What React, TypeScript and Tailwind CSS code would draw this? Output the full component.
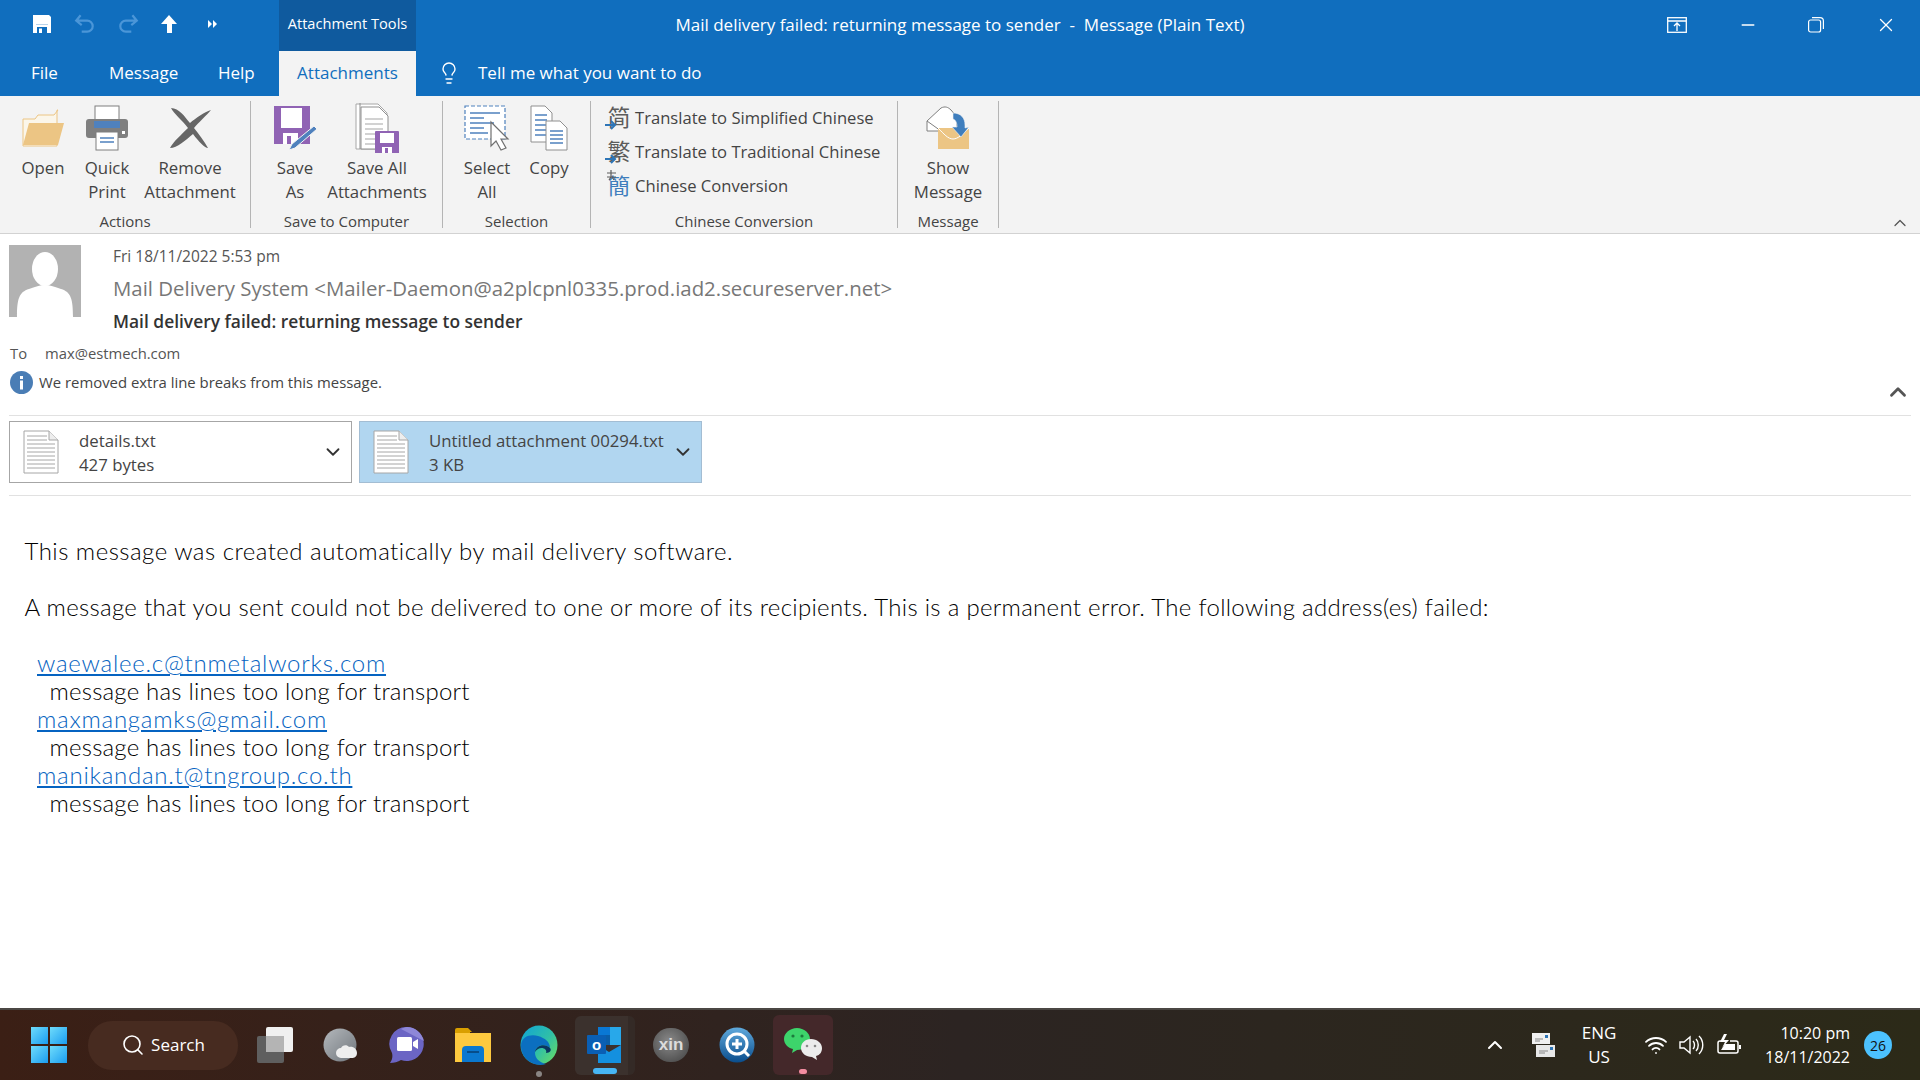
import React from 'react';
import { ChevronDown, ChevronUp, Lightbulb, Search, Wifi, X, Minus } from 'lucide-react';

// Ribbon icons
const FloppySmall = () => (
  <svg width="20" height="20" viewBox="0 0 20 20">
    <path d="M1 1h16l2 2v16H1z" fill="#fff" />
    <path d="M4 10.5h12" stroke="#b9d3ea" strokeWidth="1" />
    <rect x="5" y="13" width="10" height="6" fill="#106ebe" />
    <rect x="7" y="14.5" width="3" height="4.5" fill="#fff" />
  </svg>
);

const FolderIcon = () => (
  <svg width="44" height="40" viewBox="0 0 44 40">
    <path d="M2 11h12l3-4h16l4-5h-1v36H2z" fill="#fbf6ea" stroke="#ecc584" strokeWidth="1" />
    <path d="M8 15h35l-6 22H2z" fill="#ecc584" />
  </svg>
);

const PrinterIcon = () => (
  <svg width="44" height="46" viewBox="0 0 44 46">
    <rect x="10" y="1" width="24" height="16" fill="#fff" stroke="#7f7f7f" />
    <path d="M4 14h36a3 3 0 0 1 3 3v13a3 3 0 0 1-3 3H4a3 3 0 0 1-3-3V17a3 3 0 0 1 3-3z" fill="#7f7f7f" />
    <rect x="9" y="16" width="26" height="7" fill="#4f81bd" />
    <rect x="11" y="27" width="22" height="18" fill="#fff" stroke="#7f7f7f" />
    <path d="M15 33h14M15 37h14" stroke="#4f81bd" strokeWidth="1.5" />
    <rect x="37" y="26" width="3" height="3" fill="#fff" />
  </svg>
);

const RemoveIcon = () => (
  <svg width="44" height="42" viewBox="0 0 44 42">
    <path d="M3 1c8 0 14 9 19 15C28 11 36 5 43 3c-4 5-13 13-17 18 5 6 10 13 14 20-3 0-9-6-15-14C18 33 9 41 2 41c3-6 12-14 18-20C14 13 6 7 3 1z" fill="#666" />
  </svg>
);

const SaveAsIcon = () => (
  <svg width="44" height="46" viewBox="0 0 44 46">
    <path d="M1 1h36v38H1z" fill="#9063b4" />
    <rect x="8" y="3" width="21" height="20" fill="#fff" />
    <rect x="10" y="28" width="15" height="11" fill="#fff" />
    <rect x="14" y="31" width="4" height="8" fill="#9063b4" />
    <path d="M41 21l3 3-22 19-6 2 3-6z" fill="#4f81bd" stroke="#f3f3f3" strokeWidth="1" />
  </svg>
);

const SaveAllIcon = () => (
  <svg width="44" height="50" viewBox="0 0 44 50">
    <path d="M1 1h22l9 9v36H1z" fill="#fff" stroke="#a6a6a6" />
    <path d="M5 0v46M6 4h18l9 9v33H6z" fill="#fff" stroke="#8f8f8f" />
    <path d="M10 16h18M10 21h18M10 26h18M10 31h12M10 36h12M10 41h12" stroke="#a6a6a6" strokeWidth="1.2" />
    <rect x="20" y="28" width="24" height="23" rx="1" fill="#9063b4" />
    <rect x="25" y="30" width="14" height="10" fill="#fff" />
    <rect x="27" y="44" width="10" height="7" fill="#fff" />
    <rect x="30" y="45" width="3" height="6" fill="#9063b4" />
  </svg>
);

const SelectAllIcon = () => (
  <svg width="46" height="46" viewBox="0 0 46 46">
    <rect x="1" y="1" width="40" height="33" fill="#fff" stroke="#4f81bd" strokeWidth="1.2" strokeDasharray="4 2" />
    <path d="M6 8h30M6 13h14M6 18h24M6 23h14M6 28h18" stroke="#4f81bd" strokeWidth="1.4" />
    <path d="M27 17v24l5-5 5 9 5-2-5-9h7z" fill="#fff" stroke="#707070" strokeWidth="1.2" />
  </svg>
);

const CopyIcon = () => (
  <svg width="38" height="46" viewBox="0 0 38 46">
    <path d="M1 1h14l7 7v29H1z" fill="#fff" stroke="#8f8f8f" />
    <path d="M5 10h12M5 15h12M5 20h12M5 25h12M5 30h12" stroke="#4f81bd" strokeWidth="1.3" />
    <path d="M16 16h14l7 7v22H16z" fill="#fff" stroke="#8f8f8f" />
    <path d="M20 26h13M20 30h13M20 34h13M20 38h13" stroke="#4f81bd" strokeWidth="1.3" />
  </svg>
);

const ShowMessageIcon = () => (
  <svg width="44" height="44" viewBox="0 0 44 44">
    <path d="M1 15L15 2c4-2 7-1 10 2l6 7v14H1z" fill="#fff" stroke="#7f7f7f" />
    <path d="M1 15l14 10" stroke="#7f7f7f" />
    <path d="M12 22h31v21H12z" fill="#ecc584" />
    <path d="M12 22c6 6 10 11 15 11s10-5 16-11" fill="none" stroke="#fff" strokeWidth="1" />
    <path d="M27 7c8 0 12 5 12 12v3l4-1-8 10-9-10h5c0-4-1-7-4-8z" fill="#3f7ebd" stroke="#f3f3f3" strokeWidth="0.6" />
  </svg>
);

const ChineseIcon = ({ ch }: { ch: string }) => (
  <span className="relative flex h-[24px] w-[22px] -translate-y-[2px] items-center justify-center text-[23px] leading-none text-[#5c5c5c] [font-family:'Noto_Sans_CJK_SC',sans-serif]">
    {ch}
    <svg className="absolute left-[-3px] bottom-[-2px]" width="13" height="10" viewBox="0 0 13 10">
      <path d="M0 5h9M6 1l4 4-4 4" fill="none" stroke="#2e75b6" strokeWidth="2" />
    </svg>
  </span>
);

const ConversionIcon = () => (
  <span className="relative flex h-[24px] w-[22px] -translate-y-[2px] items-center justify-center text-[22px] leading-none text-[#3f7ebd] [font-family:'Noto_Sans_CJK_TC',sans-serif]">
    簡
    <svg className="absolute left-[-2px] top-[-2px]" width="12" height="12" viewBox="0 0 12 12" fill="none" stroke="#5c5c5c" strokeWidth="1.2">
      <path d="M1 3h9M5 0v7M1 7h9M3 10l2-3M8 10L6 7" />
    </svg>
  </span>
);

const TxtIcon = () => (
  <svg width="36" height="44" viewBox="0 0 36 44">
    <path d="M1 1h25l9 9v33H1z" fill="#fff" stroke="#a6a6a6" />
    <path d="M26 1v9h9" fill="#eee" stroke="#a6a6a6" />
    <path d="M4 6h20M4 10h20M4 14h28M4 18h28M4 22h28M4 26h28M4 30h28M4 34h28M4 38h28" stroke="#a6a6a6" strokeWidth="1" />
  </svg>
);

// Taskbar icons
const WinLogo = () => (
  <svg width="36" height="36" viewBox="0 0 36 36">
    <defs>
      <linearGradient id="wl" x1="0" y1="0" x2="1" y2="1">
        <stop offset="0" stopColor="#6fdcfb" />
        <stop offset="1" stopColor="#1a9cf0" />
      </linearGradient>
    </defs>
    <rect x="0" y="0" width="17" height="17" fill="url(#wl)" />
    <rect x="19" y="0" width="17" height="17" fill="url(#wl)" />
    <rect x="0" y="19" width="17" height="17" fill="url(#wl)" />
    <rect x="19" y="19" width="17" height="17" fill="url(#wl)" />
  </svg>
);

const TaskView = () => (
  <svg width="36" height="36" viewBox="0 0 36 36">
    <rect x="0" y="9" width="27" height="27" rx="2" fill="#5f5f5f" />
    <rect x="9" y="0" width="27" height="25" rx="2" fill="#f0f0f0" />
    <rect x="9" y="9" width="18" height="16" fill="#b4b4b4" />
  </svg>
);

const CloudBall = () => (
  <svg width="36" height="36" viewBox="0 0 36 36">
    <defs>
      <linearGradient id="cb" x1="0" y1="0" x2="1" y2="1">
        <stop offset="0" stopColor="#b4b8bc" />
        <stop offset="1" stopColor="#70767c" />
      </linearGradient>
    </defs>
    <circle cx="17" cy="18" r="16.5" fill="url(#cb)" />
    <path d="M18 31a5 5 0 0 1 0-10c1-3 6-4 8-1 4-1 8 2 8 6s-3 5-5 5z" fill="#eee" />
  </svg>
);

const TeamsIcon = () => (
  <svg width="36" height="38" viewBox="0 0 36 38">
    <path d="M18 1a17 17 0 1 1-6 33c-3 2-7 3-11 3 2-3 3-6 2-10A17 17 0 0 1 18 1z" fill="#6b65c4" />
    <path d="M18 1c8 0 15 6 17 14L12 3c2-1 4-2 6-2z" fill="#8e87d8" />
    <rect x="8" y="11" width="15" height="14" rx="1.5" fill="#fff" />
    <path d="M24 16l5-3v10l-5-3z" fill="#fff" />
  </svg>
);

const ExplorerIcon = () => (
  <svg width="36" height="34" viewBox="0 0 36 34">
    <path d="M0 2a2 2 0 0 1 2-2h11l4 4h-2v2H0z" fill="#d99f00" />
    <path d="M0 5h36v29H0z" fill="#fdc93f" />
    <path d="M7 22a4 4 0 0 1 4-4h14a4 4 0 0 1 4 4v12H7z" fill="#0b78cf" />
    <rect x="12" y="23" width="12" height="2" fill="#074d8a" />
  </svg>
);

const EdgeIcon = () => (
  <svg width="38" height="40" viewBox="0 0 38 40">
    <defs>
      <linearGradient id="eg1" x1="0" y1="0" x2="1" y2="0.8">
        <stop offset="0" stopColor="#0fa3d6" />
        <stop offset="0.6" stopColor="#2fbfa8" />
        <stop offset="1" stopColor="#62d96b" />
      </linearGradient>
    </defs>
    <ellipse cx="19" cy="20" rx="18.5" ry="19.5" fill="url(#eg1)" />
    <path d="M1 21C1 11 11 9 18 11c7 2 12 6 12 12-5-5-15-3-15 5 0 5 4 9 11 11C13 43 1 33 1 21z" fill="#0b6fc0" />
    <path d="M15 27c1-7 10-9 15-4 2 2 0 5-4 5 2-5-7-8-11-1z" fill="#0a3560" />
  </svg>
);

const OutlookIcon = () => (
  <svg width="36" height="36" viewBox="0 0 36 36">
    <rect x="11" y="0" width="23" height="8" fill="#0a78d4" />
    <rect x="11" y="8" width="12" height="10" fill="#0a5ea8" />
    <rect x="23" y="0" width="11" height="18" fill="#28a8ea" />
    <path d="M11 18l11 7 12-7v18H11z" fill="#1490df" />
    <rect x="0" y="8" width="19" height="19" rx="1" fill="#0a5fb4" />
    <text x="9.5" y="23" textAnchor="middle" fontSize="15" fontWeight="700" fill="#fff" fontFamily="Liberation Sans">o</text>
  </svg>
);

const XinIcon = () => (
  <span className="flex h-[34px] w-[36px] items-center justify-center rounded-full bg-[radial-gradient(circle_at_45%_40%,#8a8a8a,#3f3f3f)] text-[17px] font-bold text-[#dcdcdc] [font-family:'Liberation_Sans',sans-serif]">xin</span>
);

const QQIcon = () => (
  <svg width="36" height="36" viewBox="0 0 36 36">
    <defs>
      <linearGradient id="qq" x1="0" y1="0" x2="0" y2="1">
        <stop offset="0" stopColor="#5fa9dc" />
        <stop offset="1" stopColor="#0a4d8c" />
      </linearGradient>
    </defs>
    <circle cx="18" cy="18" r="17.5" fill="url(#qq)" />
    <circle cx="18" cy="17" r="10" fill="none" stroke="#fff" strokeWidth="3" />
    <path d="M25 24l5 5" stroke="#fff" strokeWidth="3" />
    <path d="M18 12v10M13 17h10" stroke="#fff" strokeWidth="3" />
  </svg>
);

const WeChatIcon = () => (
  <svg width="38" height="34" viewBox="0 0 38 34">
    <path d="M13 0c7 0 13 5 13 11s-6 11-13 11l-5 3 1-4C4 20 0 16 0 11 0 5 6 0 13 0z" fill="#3dd46b" />
    <circle cx="9" cy="8" r="1.6" fill="#1c7a3c" />
    <circle cx="18" cy="8" r="1.6" fill="#1c7a3c" />
    <path d="M27 11c6 0 11 4 11 9 0 4-2 7-6 8l1 4-5-3c-6 0-11-4-11-9s4-9 10-9z" fill="#ececec" />
    <circle cx="23" cy="18" r="1.3" fill="#8a8a8a" />
    <circle cx="31" cy="18" r="1.3" fill="#8a8a8a" />
  </svg>
);

const TrayMail = () => (
  <svg width="24" height="24" viewBox="0 0 24 24">
    <rect x="1" y="0" width="18" height="11" fill="#f0f0f0" />
    <rect x="14" y="2" width="3" height="3" fill="#2e75b6" />
    <path d="M4 6h8M4 8h5" stroke="#888" />
    <rect x="5" y="12" width="19" height="12" fill="#e8e8e8" />
    <rect x="19" y="14" width="3" height="3" fill="#2e75b6" />
    <path d="M8 18h9M8 20h6" stroke="#888" />
  </svg>
);

const Speaker = () => (
  <svg width="26" height="22" viewBox="0 0 26 22" fill="none" stroke="#fff" strokeWidth="1.4">
    <path d="M1 8h4l6-5v16l-6-5H1z" />
    <path d="M14 7c2 2 2 6 0 8M17 5c3 3 3 9 0 12M20 2c5 5 5 13 0 18" />
  </svg>
);

const Battery = () => (
  <svg width="26" height="22" viewBox="0 0 26 22" fill="none" stroke="#fff" strokeWidth="1.5">
    <path d="M9 7H4a2 2 0 0 0-2 2v8a2 2 0 0 0 2 2h16a2 2 0 0 0 2-2V9a2 2 0 0 0-2-2h-6" />
    <path d="M24 11v4" strokeWidth="2" />
    <path d="M8 0L4 8h5l-3 6 7-8H8l3-6z" fill="#fff" stroke="none" />
    <path d="M9 10h10v6H5z" fill="#fff" stroke="none" />
  </svg>
);

const RibbonButton = ({ icon, lines, w }: { icon: React.ReactNode; lines: string[]; w: string }) => (
  <div className={`flex flex-col items-center ${w}`}>
    <div className="flex h-[55px] -translate-y-[1px] items-center justify-center">{icon}</div>
    <div className="flex flex-col items-center leading-[23.5px] whitespace-nowrap">
      {lines.map(l => <span key={l}>{l}</span>)}
    </div>
  </div>
);

const Group = ({ label, w, children }: { label: string; w: string; children: React.ReactNode }) => (
  <div className={`flex h-[127px] flex-col border-r border-[#b4b4b4] ${w}`}>
    <div className="flex flex-1">{children}</div>
    <div className="mb-[-2px] text-center text-[15px] leading-[18px] text-[#444]">{label}</div>
  </div>
);

const Chip = ({ name, size, active }: { name: string; size: string; active?: boolean }) => (
  <div className={`flex h-[62px] w-[343px] items-center border pr-[7px] ${active ? 'border-[#a3bdd3] bg-[#b1d6f0]' : 'border-[#a6a6a6] bg-white'}`}>
    <div className="flex w-[62px] justify-center"><TxtIcon /></div>
    <div className="mt-[1px] ml-[7px] flex flex-1 flex-col text-[16.8px] leading-[24px] whitespace-nowrap text-[#444]">
      <span>{name}</span>
      <span>{size}</span>
    </div>
    <ChevronDown size={22} strokeWidth={2} className="text-[#333]" />
  </div>
);

const Fail = () => <div className="pl-[25px]">message has lines too long for transport</div>;
const Addr = ({ v }: { v: string }) => <div className="pl-[12.5px] tracking-[0.75px] text-[#0563c1] underline">{v}</div>;

const TaskItem = ({ children }: { children: React.ReactNode }) => (
  <div className="flex h-full w-[66px] items-center justify-center">{children}</div>
);

export default function App() {
  return (
    <div className="flex h-screen w-[1920px] flex-col overflow-hidden bg-white [font-family:'Open_Sans',sans-serif]">
      {/* title bar + tabs */}
      <div className="h-[96px] shrink-0 bg-[#106ebe] text-white">
        <div className="grid h-[51px] grid-cols-[416px_1fr_416px]">
          <div className="flex items-center">
            <div className="flex w-[279px] items-center pb-[3px] pl-[32px]">
              <FloppySmall />
              <svg width="22" height="22" viewBox="0 0 20 20" fill="none" stroke="#4b96d8" strokeWidth="2" className="ml-[22px]">
                <path d="M6 2L2 7l5 4M2 7h10a5 5 0 0 1 0 10H7" />
              </svg>
              <svg width="22" height="22" viewBox="0 0 20 20" fill="none" stroke="#4b96d8" strokeWidth="2" className="ml-[21px]">
                <path d="M14 2l4 5-5 4M18 7H8a5 5 0 0 0 0 10h5" />
              </svg>
              <svg width="18" height="20" viewBox="0 0 18 20" fill="#fff" className="ml-[21px]">
                <path d="M9 1l8 9h-5v9H7v-9H1z" />
              </svg>
              <svg width="10" height="10" viewBox="0 0 10 10" fill="#fff" className="ml-[30px]">
                <path d="M0 1l4 4-4 4zM5 1l4 4-4 4z" />
              </svg>
            </div>
            <div className="flex h-full w-[137px] items-center justify-center bg-[#0f5a9e] pb-[3px] text-[14.6px]">Attachment Tools</div>
          </div>
          <div className="flex items-center justify-center pb-[2px] whitespace-nowrap text-[17px]">
            Mail delivery failed: returning message to sender&nbsp; -&nbsp; Message (Plain Text)
          </div>
          <div className="flex items-center justify-end pb-[2px]">
            <svg width="20" height="16" viewBox="0 0 20 16" fill="none" stroke="#fff" strokeWidth="1.3" className="mr-[51px]">
              <rect x="0.7" y="0.7" width="18.6" height="14.6" />
              <path d="M1 4h18M10 14V6M7 9l3-3 3 3" />
            </svg>
            <Minus size={20} strokeWidth={1.6} className="mr-[50px]" />
            <svg width="16" height="16" viewBox="0 0 16 16" fill="none" stroke="#fff" strokeWidth="1.2" className="mr-[51px]">
              <rect x="0.6" y="3" width="12" height="12" rx="2" />
              <path d="M4 0.6h8a3.4 3.4 0 0 1 3.4 3.4v8" />
            </svg>
            <X size={22} strokeWidth={1.4} className="mr-[23px]" />
          </div>
        </div>
        <div className="flex h-[45px] items-center pl-[31px] text-[17px]">
          <span className="mb-[2px] w-[78px]">File</span>
          <span className="mb-[2px] w-[109px]">Message</span>
          <span className="mb-[2px] w-[61px]">Help</span>
          <span className="flex h-full w-[137px] items-center justify-center bg-[#f3f3f3] pb-[2px] text-[#106ebe]">Attachments</span>
          <Lightbulb size={24} strokeWidth={1.4} className="mb-[2px] ml-[21px]" />
          <span className="mb-[2px] ml-[17px]">Tell me what you want to do</span>
        </div>
      </div>

      {/* ribbon */}
      <div className="relative flex h-[138px] shrink-0 items-start border-b border-[#d2d2d2] bg-[#f3f3f3] pt-[5px] text-[16.8px] text-[#444]">
        <Group label="Actions" w="w-[251px]">
          <div className="flex pl-[19px]">
            <RibbonButton icon={<FolderIcon />} lines={['Open']} w="w-[48px]" />
            <RibbonButton icon={<PrinterIcon />} lines={['Quick', 'Print']} w="w-[78px] ml-[1px]" />
            <RibbonButton icon={<RemoveIcon />} lines={['Remove', 'Attachment']} w="w-[88px]" />
          </div>
        </Group>
        <Group label="Save to Computer" w="w-[192px]">
          <div className="flex pl-[18px]">
            <RibbonButton icon={<SaveAsIcon />} lines={['Save', 'As']} w="w-[52px]" />
            <RibbonButton icon={<SaveAllIcon />} lines={['Save All', 'Attachments']} w="w-[100px] ml-[6px]" />
          </div>
        </Group>
        <Group label="Selection" w="w-[148px]">
          <div className="flex pl-[22px]">
            <RibbonButton icon={<SelectAllIcon />} lines={['Select', 'All']} w="w-[44px]" />
            <RibbonButton icon={<CopyIcon />} lines={['Copy']} w="w-[44px] ml-[18px]" />
          </div>
        </Group>
        <Group label="Chinese Conversion" w="w-[307px]">
          <div className="flex flex-col gap-[10px] pl-[17px] pt-[5px] text-[16.6px] whitespace-nowrap">
            <div className="flex h-[24px] items-center gap-[5px]"><ChineseIcon ch="简" /><span>Translate to Simplified Chinese</span></div>
            <div className="flex h-[24px] items-center gap-[5px]"><ChineseIcon ch="繁" /><span>Translate to Traditional Chinese</span></div>
            <div className="flex h-[24px] items-center gap-[5px]"><ConversionIcon /><span>Chinese Conversion</span></div>
          </div>
        </Group>
        <Group label="Message" w="w-[101px]">
          <div className="flex w-full justify-center">
            <RibbonButton icon={<ShowMessageIcon />} lines={['Show', 'Message']} w="w-[90px]" />
          </div>
        </Group>
        <ChevronUp size={20} strokeWidth={1.5} className="absolute right-[10px] bottom-[0px] text-[#555]" />
      </div>

      {/* message header */}
      <div className="relative shrink-0 pt-[11px]">
        <div className="flex px-[9px]">
          <svg width="72" height="72" viewBox="0 0 72 72" className="shrink-0">
            <rect width="72" height="72" fill="#b2b2b2" />
            <ellipse cx="36" cy="24" rx="13" ry="17" fill="#fff" />
            <path d="M8 72c0-18 2-25 12-28 6-2 11-4 16-4s10 2 16 4c10 3 12 10 12 28z" fill="#fff" />
          </svg>
          <div className="ml-[32px] flex flex-col">
            <div className="mt-[1px] text-[15.5px] leading-[20px] text-[#555]">Fri 18/11/2022 5:53 pm</div>
            <div className="mt-[6px] text-[20.4px] leading-[32px] text-[#777]">Mail Delivery System &lt;Mailer-Daemon@a2plcpnl0335.prod.iad2.secureserver.net&gt;</div>
            <div className="mt-[5px] text-[17.4px] leading-[24px] font-semibold text-[#333]">Mail delivery failed: returning message to sender</div>
          </div>
        </div>
        <div className="mt-[10px] flex pl-[10px] text-[14.8px] leading-[20px] text-[#555]">
          <span className="w-[35px]">To</span>
          <span>max@estmech.com</span>
        </div>
        <div className="mt-[7px] flex items-center pl-[10px] text-[14.9px] leading-[24px] text-[#444]">
          <svg width="23" height="23" viewBox="0 0 23 23">
            <circle cx="11.5" cy="11.5" r="11.5" fill="#4a7db5" />
            <rect x="10" y="9.5" width="3" height="9" fill="#fff" />
            <rect x="10" y="5" width="3" height="3" fill="#fff" />
          </svg>
          <span className="ml-[6px]">We removed extra line breaks from this message.</span>
        </div>
        <ChevronUp size={26} strokeWidth={2.6} className="absolute right-[9px] top-[145px] text-[#555]" />
      </div>

      {/* attachments */}
      <div className="mx-[9px] mt-[21px] flex shrink-0 items-center gap-[7px] border-y border-[#e1e1e1] pt-[5px] pb-[12px]">
        <Chip name="details.txt" size="427 bytes" />
        <Chip name="Untitled attachment 00294.txt" size="3 KB" active />
      </div>

      {/* body */}
      <div className="flex-1 pl-[24.5px] pt-[41px] text-[24px] leading-[28px] font-light tracking-[0.2px] text-black [font-family:'Lato',sans-serif]">
        <div className="tracking-[0.48px]">This message was created automatically by mail delivery software.</div>
        <div className="mt-[28px] tracking-[0.3px]">A message that you sent could not be delivered to one or more of its recipients. This is a permanent error. The following address(es) failed:</div>
        <div className="mt-[28px]">
          <Addr v="waewalee.c@tnmetalworks.com" />
          <Fail />
          <Addr v="maxmangamks@gmail.com" />
          <Fail />
          <Addr v="manikandan.t@tngroup.co.th" />
          <Fail />
        </div>
      </div>

      {/* taskbar */}
      <div className="flex h-[72px] shrink-0 items-center border-t-2 border-[#4b4744] bg-gradient-to-r from-[#3b1f15] via-[#2c2422] to-[#2c2a18] text-white">
        <div className="flex w-[88px] justify-center pl-[10px]"><WinLogo /></div>
        <div className="flex h-[49px] w-[150px] items-center justify-center gap-[6px] rounded-[24px] bg-[#472b20] text-[17px]">
          <Search size={24} strokeWidth={1.6} />
          <span>Search</span>
        </div>
        <div className="ml-[4px] flex h-full items-center">
          <TaskItem><TaskView /></TaskItem>
          <TaskItem><CloudBall /></TaskItem>
          <TaskItem><TeamsIcon /></TaskItem>
          <TaskItem><ExplorerIcon /></TaskItem>
          <div className="relative flex h-full w-[66px] items-center justify-center">
            <EdgeIcon />
            <span className="absolute bottom-[3px] h-[6px] w-[6px] rounded-full bg-[#8a8583]" />
          </div>
          <div className="relative mr-[3px] ml-[3px] flex h-[59px] w-[60px] items-center justify-center rounded-[6px] bg-[linear-gradient(to_right,#3b312d_88%,#342a26_88%)]">
            <OutlookIcon />
            <span className="absolute bottom-[1px] h-[6px] w-[24px] rounded-full bg-[#47b6f5]" />
          </div>
          <TaskItem><XinIcon /></TaskItem>
          <TaskItem><QQIcon /></TaskItem>
          <div className="relative ml-[3px] flex h-[60px] w-[60px] items-center justify-center rounded-[6px] bg-[#44282a]">
            <WeChatIcon />
            <span className="absolute bottom-[1px] h-[5px] w-[8px] rounded-full bg-[#f28ca0]" />
          </div>
        </div>
        <div className="ml-auto flex h-full items-center">
          <ChevronUp size={24} strokeWidth={2} className="mr-[24px]" />
          <TrayMail />
          <div className="ml-[26px] flex w-[36px] flex-col items-center text-[17px] leading-[24px]">
            <span>ENG</span>
            <span>US</span>
          </div>
          <Wifi size={24} strokeWidth={1.8} className="ml-[27px]" />
          <div className="ml-[11px]"><Speaker /></div>
          <div className="ml-[11px]"><Battery /></div>
          <div className="ml-[11px] flex w-[97px] flex-col items-end text-[16px] leading-[24px]">
            <span>10:20 pm</span>
            <span>18/11/2022</span>
          </div>
          <span className="mr-[28px] ml-[14px] flex h-[28px] w-[28px] items-center justify-center rounded-full bg-[#4cc2ff] text-[14px] text-[#111]">26</span>
        </div>
      </div>
    </div>
  );
}
